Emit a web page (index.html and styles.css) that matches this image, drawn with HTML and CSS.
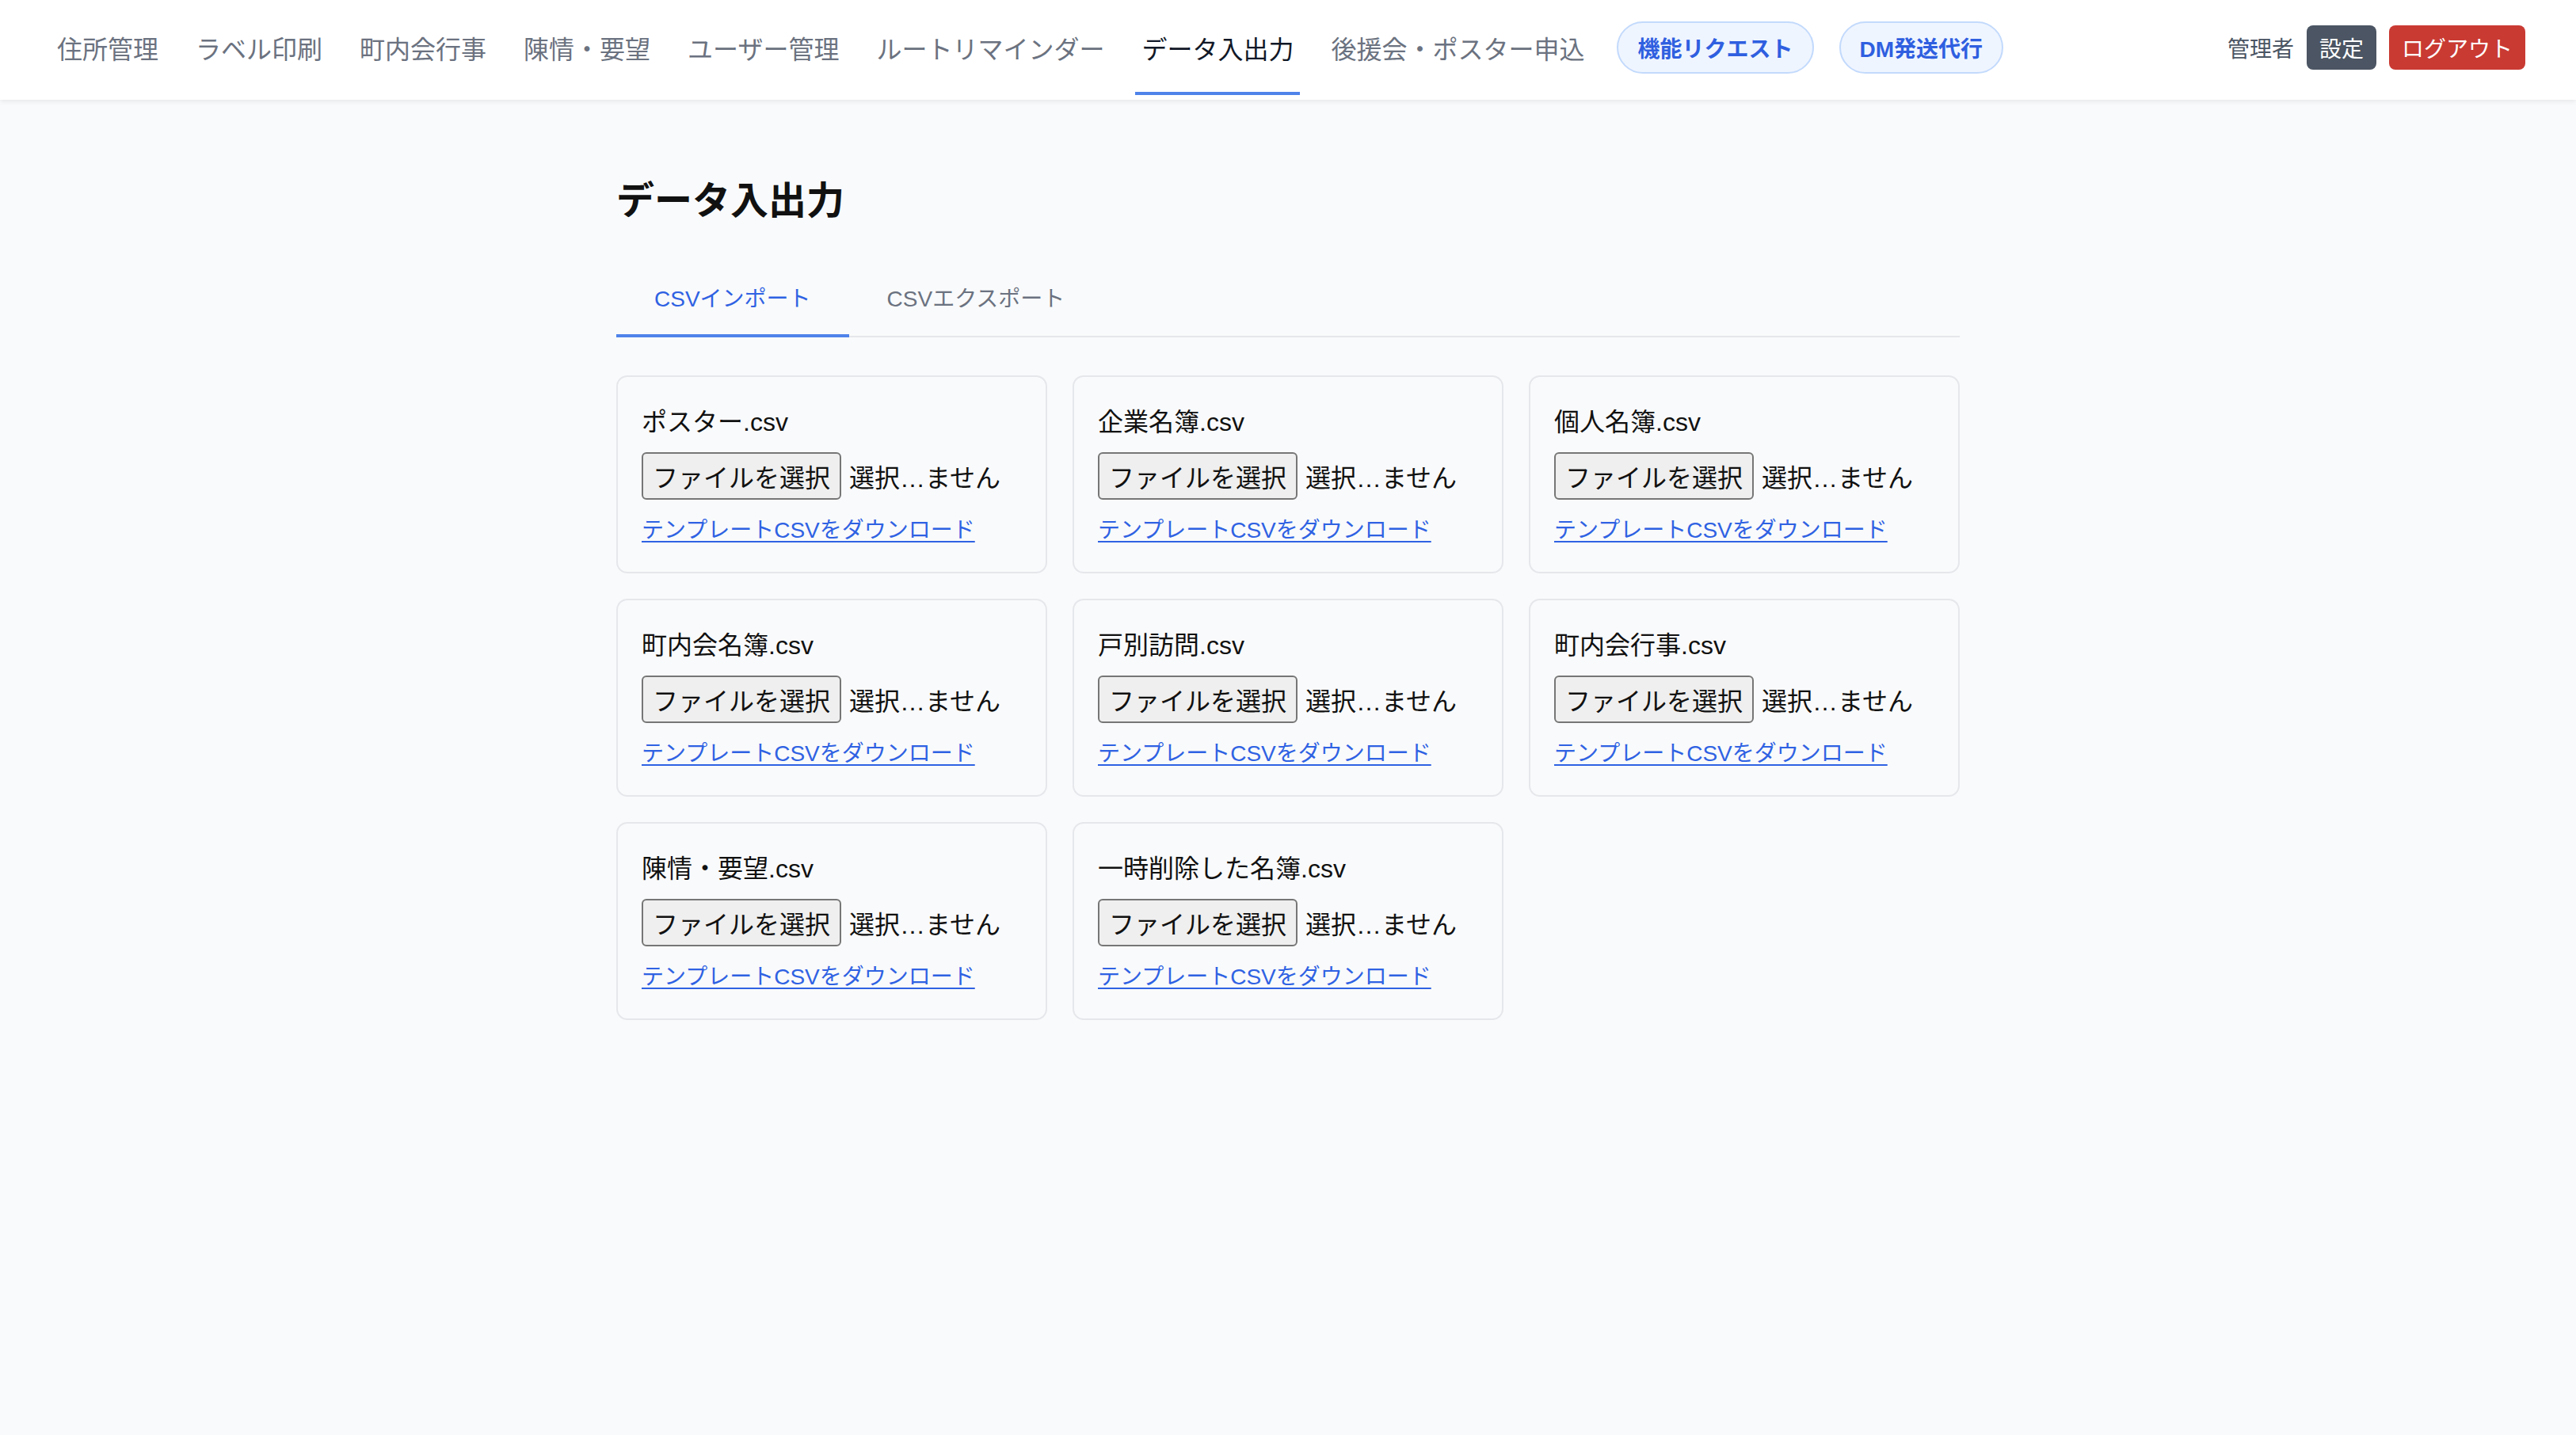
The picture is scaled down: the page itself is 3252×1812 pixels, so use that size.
FILE: index.html
```html
<!DOCTYPE html>
<html lang="ja">
<head>
<meta charset="utf-8">
<title>データ入出力</title>
<link rel="stylesheet" href="styles.css">
</head>
<body>
<header class="topbar">
  <nav class="mainnav">
    <a class="navlink" href="#">住所管理</a>
    <a class="navlink" href="#">ラベル印刷</a>
    <a class="navlink" href="#">町内会行事</a>
    <a class="navlink" href="#">陳情・要望</a>
    <a class="navlink" href="#">ユーザー管理</a>
    <a class="navlink" href="#">ルートリマインダー</a>
    <a class="navlink active" href="#">データ入出力</a>
    <a class="navlink" href="#">後援会・ポスター申込</a>
  </nav>
  <div class="pills">
    <a class="pill" href="#">機能リクエスト</a>
    <a class="pill" href="#">DM発送代行</a>
  </div>
  <div class="userbox">
    <span class="username">管理者</span>
    <a class="btn btn-gray" href="#">設定</a>
    <a class="btn btn-red" href="#">ログアウト</a>
  </div>
</header>

<main class="page">
  <h1 class="title">データ入出力</h1>
  <div class="tabs">
    <a class="tab active" href="#">CSVインポート</a>
    <a class="tab" href="#">CSVエクスポート</a>
  </div>

  <section class="grid">
    <div class="card">
      <div class="card-title">ポスター.csv</div>
      <div class="filerow"><span class="filebtn">ファイルを選択</span><span class="filename">選択…ません</span></div>
      <a class="tpl" href="#">テンプレートCSVをダウンロード</a>
    </div>
    <div class="card">
      <div class="card-title">企業名簿.csv</div>
      <div class="filerow"><span class="filebtn">ファイルを選択</span><span class="filename">選択…ません</span></div>
      <a class="tpl" href="#">テンプレートCSVをダウンロード</a>
    </div>
    <div class="card">
      <div class="card-title">個人名簿.csv</div>
      <div class="filerow"><span class="filebtn">ファイルを選択</span><span class="filename">選択…ません</span></div>
      <a class="tpl" href="#">テンプレートCSVをダウンロード</a>
    </div>
    <div class="card">
      <div class="card-title">町内会名簿.csv</div>
      <div class="filerow"><span class="filebtn">ファイルを選択</span><span class="filename">選択…ません</span></div>
      <a class="tpl" href="#">テンプレートCSVをダウンロード</a>
    </div>
    <div class="card">
      <div class="card-title">戸別訪問.csv</div>
      <div class="filerow"><span class="filebtn">ファイルを選択</span><span class="filename">選択…ません</span></div>
      <a class="tpl" href="#">テンプレートCSVをダウンロード</a>
    </div>
    <div class="card">
      <div class="card-title">町内会行事.csv</div>
      <div class="filerow"><span class="filebtn">ファイルを選択</span><span class="filename">選択…ません</span></div>
      <a class="tpl" href="#">テンプレートCSVをダウンロード</a>
    </div>
    <div class="card">
      <div class="card-title">陳情・要望.csv</div>
      <div class="filerow"><span class="filebtn">ファイルを選択</span><span class="filename">選択…ません</span></div>
      <a class="tpl" href="#">テンプレートCSVをダウンロード</a>
    </div>
    <div class="card">
      <div class="card-title">一時削除した名簿.csv</div>
      <div class="filerow"><span class="filebtn">ファイルを選択</span><span class="filename">選択…ません</span></div>
      <a class="tpl" href="#">テンプレートCSVをダウンロード</a>
    </div>
  </section>
</main>
</body>
</html>
```

FILE: styles.css
```css
* {
  box-sizing: border-box;
}

html, body {
  margin: 0;
  padding: 0;
}

body {
  background: #f9fafb;
  color: #111827;
  font-family: "Liberation Sans", "Noto Sans CJK JP", sans-serif;
  min-height: 1812px;
}

a {
  text-decoration: none;
}

/* ---------- header ---------- */
.topbar {
  display: flex;
  align-items: center;
  height: 126px;
  padding: 0 64px 6px 64px;
  background: #ffffff;
  box-shadow: 0 2px 6px rgba(0, 0, 0, 0.08);
}

.mainnav {
  display: flex;
  align-self: stretch;
  gap: 31px;
}

.navlink {
  display: flex;
  align-items: center;
  padding: 0 8px;
  border-top: 4px solid transparent;
  border-bottom: 4px solid transparent;
  font-family: "Noto Sans CJK JP", sans-serif;
  font-size: 32px;
  color: #6b7280;
  white-space: nowrap;
}

.navlink.active {
  color: #111827;
  border-bottom-color: #4f83ea;
}

.pills {
  display: flex;
  gap: 32px;
  margin-left: 33px;
}

.pill {
  display: flex;
  align-items: center;
  height: 66px;
  padding: 0 24px;
  border: 2px solid #c3dafc;
  border-radius: 999px;
  background: #eff5ff;
  color: #2f5fe0;
  font-size: 28px;
  font-weight: 700;
  white-space: nowrap;
}

.userbox {
  display: flex;
  align-items: center;
  gap: 16px;
  margin-left: auto;
}

.username {
  font-family: "Noto Sans CJK JP", sans-serif;
  font-size: 28px;
  color: #4b5563;
}

.btn {
  display: flex;
  align-items: center;
  height: 56px;
  padding: 0 16px;
  border-radius: 8px;
  color: #ffffff;
  font-family: "Noto Sans CJK JP", sans-serif;
  font-size: 28px;
}

.btn-gray {
  background: #4b5563;
}

.btn-red {
  background: #c93a33;
}

/* ---------- main ---------- */
.page {
  max-width: 1792px;
  margin: 0 auto;
  padding: 96px 48px 0 48px;
}

.title {
  margin: 0 0 48px 0;
  font-size: 48px;
  line-height: 64px;
  font-weight: 700;
  color: #111111;
}

.tabs {
  display: flex;
  border-bottom: 2px solid #e5e7eb;
}

.tab {
  padding: 24px 48px;
  margin-bottom: -2px;
  border-bottom: 4px solid transparent;
  font-size: 28px;
  line-height: 40px;
  color: #6b7280;
}

.tab.active {
  color: #2f62e3;
  border-bottom-color: #4f83ea;
}

.grid {
  display: grid;
  grid-template-columns: repeat(3, 1fr);
  gap: 32px;
  margin-top: 48px;
}

.card {
  display: flex;
  flex-direction: column;
  align-items: flex-start;
  padding: 33px 30px 30px 30px;
  border: 2px solid #e5e7eb;
  border-radius: 14px;
  background: #f9fafb;
}

.card-title {
  font-size: 32px;
  line-height: 48px;
  color: #111111;
  margin-bottom: 14px;
}

.filerow {
  display: flex;
  align-items: center;
  margin-bottom: 17px;
}

.filebtn {
  display: flex;
  align-items: center;
  height: 60px;
  padding: 0 12px;
  border: 2px solid #767676;
  border-radius: 6px;
  background: #efefef;
  font-size: 32px;
  color: #111111;
}

.filename {
  margin-left: 10px;
  font-size: 32px;
  color: #111111;
}

.tpl {
  font-size: 28px;
  line-height: 44px;
  color: #2f62e3;
  text-decoration: underline;
  text-underline-offset: 4px;
}
```
